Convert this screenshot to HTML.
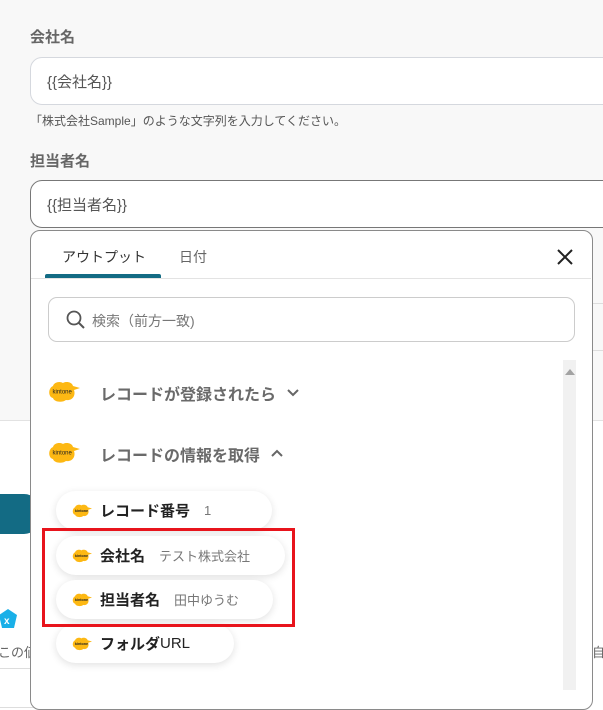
<!DOCTYPE html>
<html><head><meta charset="utf-8"><style>
*{box-sizing:border-box;margin:0;padding:0}
body{width:603px;height:688px;overflow:hidden;background:#fff;position:relative;font-family:"Liberation Sans","Noto Sans CJK JP",sans-serif;color:#333}
.abs{position:absolute}
.card{left:-20px;top:-20px;width:660px;height:441px;background:#f8f8f8;border:1px solid #e2e2e2;border-radius:10px}
.lbl{font-size:15px;font-weight:bold;color:#666}
.inp{background:#fff;border:1px solid #d5d8de;border-radius:12px;font-size:15px;color:#555;padding-left:16px;display:flex;align-items:center}
.pop{left:30px;top:230px;width:563px;height:480px;background:#fff;border:1px solid #8a8a8a;border-radius:10px}
.logo{width:32px;height:22px}
.pill{left:56px;height:39px;background:#fff;border-radius:20px;box-shadow:0 2px 8px rgba(0,0,0,.12);display:flex;align-items:center;padding-left:16px;font-size:15px;font-weight:bold;color:#222}
.pill small{font-size:13px;font-weight:normal;color:#777;margin-left:14px}
.pill svg{margin-right:8px}
.grp{font-size:16px;font-weight:bold;color:#6a6a6a}
</style></head><body>
<div class="abs card"></div>
<div class="abs lbl" style="left:30px;top:26px">会社名</div>
<div class="abs inp" style="left:30px;top:57px;width:600px;height:48px">{{会社名}}</div>
<div class="abs" style="left:30px;top:112px;font-size:12px;color:#555">「株式会社Sample」のような文字列を入力してください。</div>
<div class="abs lbl" style="left:30px;top:150px">担当者名</div>
<div class="abs inp" style="left:30px;top:180px;width:600px;height:48px;border-color:#777">{{担当者名}}</div>
<div class="abs" style="left:592px;top:303px;width:20px;border-top:1px solid #ddd"></div>
<div class="abs" style="left:592px;top:350px;width:20px;border-top:1px solid #ddd"></div>
<div class="abs" style="left:-20px;top:494px;width:60px;height:40px;background:#136b84;border-radius:16px"></div>
<svg class="abs" style="left:-2px;top:608px" width="20" height="22" viewBox="0 0 20 22"><path d="M10 1L19 7L16 20H4L1 7Z" fill="#1ab0e8"/><text x="6" y="16" font-size="10" font-weight="bold" fill="#fff" font-family="Liberation Sans">x</text></svg>
<div class="abs" style="left:-2px;top:642px;font-size:13px;color:#666">この値</div>
<div class="abs" style="left:592px;top:642px;font-size:13px;color:#666">自</div>
<div class="abs" style="left:-10px;top:668px;width:60px;height:40px;border:1px solid #ddd;border-radius:10px"></div>

<div class="abs pop"></div>
<div class="abs" style="left:62px;top:247px;font-size:14px;color:#333">アウトプット</div>
<div class="abs" style="left:179px;top:247px;font-size:14px;color:#666">日付</div>
<div class="abs" style="left:45px;top:274px;width:116px;height:4px;background:#136b84;border-radius:2px 2px 0 0"></div>
<div class="abs" style="left:31px;top:278px;width:560px;border-top:1px solid #e3e3e3"></div>
<svg class="abs" style="left:556px;top:248px" width="18" height="18" viewBox="0 0 18 18"><path d="M2 2L16 16M16 2L2 16" stroke="#222" stroke-width="2"/></svg>
<div class="abs" style="left:48px;top:297px;width:527px;height:45px;border:1px solid #ccc;border-radius:9px"></div>
<svg class="abs" style="left:66px;top:310px" width="20" height="20" viewBox="0 0 20 20"><circle cx="8" cy="8" r="6.5" stroke="#555" stroke-width="1.8" fill="none"/><path d="M13 13L18 18" stroke="#555" stroke-width="2"/></svg>
<div class="abs" style="left:92px;top:311px;font-size:14px;color:#777">検索（前方一致)</div>
<div class="abs" style="left:563px;top:360px;width:13px;height:330px;background:#f1f1f1"></div>
<svg class="abs" style="left:565px;top:368px" width="10" height="8"><path d="M0 7L5 1L10 7Z" fill="#a3a3a3"/></svg>

<svg width="0" height="0" style="position:absolute"><defs><g id="k"><path d="M5 5C6 1 12 0 15 2C18 0 24 1 25 5L32 7L26 9C28 15 24 20 18 19C14 22 6 21 5 17C0 16 0 7 5 5Z" fill="#fdb813"/><text x="4.5" y="12.5" font-size="6" font-family="Liberation Sans" fill="#222">kintone</text></g></defs></svg>
<svg class="abs logo" style="left:48px;top:381px" viewBox="0 0 32 22"><use href="#k"/></svg>
<div class="abs grp" style="left:100px;top:381px">レコードが登録されたら</div>
<svg class="abs" style="left:286px;top:388px" width="14" height="10"><path d="M2 2L7 7L12 2" stroke="#666" stroke-width="2" fill="none"/></svg>
<svg class="abs logo" style="left:48px;top:442px" viewBox="0 0 32 22"><use href="#k"/></svg>
<div class="abs grp" style="left:100px;top:442px">レコードの情報を取得</div>
<svg class="abs" style="left:270px;top:448px" width="14" height="10"><path d="M2 8L7 3L12 8" stroke="#666" stroke-width="2" fill="none"/></svg>

<div class="abs pill" style="top:491px;width:216px"><svg width="20" height="14" viewBox="0 0 32 22"><use href="#k"/></svg>レコード番号<small>1</small></div>
<div class="abs pill" style="top:536px;width:229px"><svg width="20" height="14" viewBox="0 0 32 22"><use href="#k"/></svg>会社名<small>テスト株式会社</small></div>
<div class="abs pill" style="top:580px;width:217px"><svg width="20" height="14" viewBox="0 0 32 22"><use href="#k"/></svg>担当者名<small>田中ゆうむ</small></div>
<div class="abs pill" style="top:624px;width:178px"><svg width="20" height="14" viewBox="0 0 32 22"><use href="#k"/></svg>フォルダ<span style="font-weight:normal">URL</span></div>
<div class="abs" style="left:42px;top:528px;width:253px;height:99px;border:3px solid #e8141c"></div>
</body></html>
